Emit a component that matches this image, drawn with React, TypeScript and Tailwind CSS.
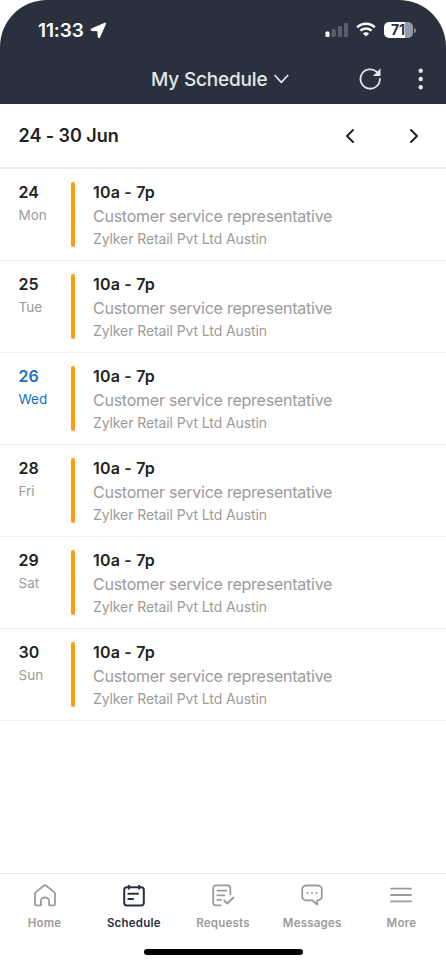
import type { ReactNode } from 'react';

type Shift = { date: string; day: string; today?: boolean };

const shifts: Shift[] = [
  { date: '24', day: 'Mon' },
  { date: '25', day: 'Tue' },
  { date: '26', day: 'Wed', today: true },
  { date: '28', day: 'Fri' },
  { date: '29', day: 'Sat' },
  { date: '30', day: 'Sun' },
];

function StatusBar() {
  return (
    <div className="flex h-[54px] items-center pt-[6px] pl-[38px] pr-[30px] text-white">
      <span className="w-[49px] pt-px text-[19px] leading-6 font-semibold tracking-[-0.1px] whitespace-nowrap">11:33</span>
      <svg className="ml-[3px]" width="17" height="17" viewBox="0 0 17 17" fill="currentColor">
        <path d="M14.700.8 1.500 6.600c-1.300.6-1.100 2.200.4 2.300l5.500.3.3 5.600c.1 1.500 1.800 1.700 2.400.4L16 2c.4-.9-.4-1.600-1.300-1.200Z" />
      </svg>
      <svg className="ml-auto" width="24" height="16" viewBox="0 0 24 16" fill="currentColor">
        <rect x="0.500" y="9.500" width="4" height="5.500" rx="1.200" />
        <g opacity="0.22">
          <rect x="6.700" y="7" width="4" height="8" rx="1.200" />
          <rect x="12.900" y="4" width="4" height="11" rx="1.200" />
          <rect x="19" y="1" width="4" height="14" rx="1.200" />
        </g>
      </svg>
      <svg className="ml-[7px]" width="20" height="16" viewBox="0 0 20 16" fill="none" stroke="currentColor" strokeWidth="2.500">
        <path d="M1.200 5.300a12.600 12.600 0 0 1 17.600 0" />
        <path d="M4.400 8.700a8 8 0 0 1 11.200 0" />
        <path d="M10 14.600 6.900 11.500a4.400 4.400 0 0 1 6.200 0Z" fill="currentColor" stroke="none" />
      </svg>
      <div className="ml-[8px] flex items-center">
        <div className="flex h-4 w-[29px] items-center justify-center rounded-[5px] bg-[linear-gradient(90deg,#fff_72.500%,#969ba3_72.500%)] pr-px text-[14px] leading-4 font-bold tracking-[-0.2px] text-[#29313f]">
          71
        </div>
        <div className="ml-px h-[5px] w-[2px] rounded-r-full bg-[#828892]" />
      </div>
    </div>
  );
}

function TitleBar() {
  return (
    <div className="flex h-[50px] items-center pl-[151px] pr-[17px] text-[#e4e6e9]">
      <h1 className="pt-[2px] text-[19px] leading-6 font-medium tracking-[-0.18px] whitespace-nowrap">My Schedule</h1>
      <svg className="ml-[7px]" width="15" height="10" viewBox="0 0 15 10" fill="none" stroke="currentColor" strokeWidth="1.700" strokeLinecap="round" strokeLinejoin="round">
        <path d="m1 1.500 6.300 6.800 6.400-6.800" />
      </svg>
      <svg className="ml-auto" width="24" height="24" viewBox="0 0 24 24" fill="none" stroke="currentColor" strokeWidth="1.800">
        <path d="M21.900 12a9.700 9.700 0 1 1-3.200-7.200L20.200 6.400" strokeLinecap="round" />
        <path d="M22.500 1.500v7.400h-7.600Z" fill="currentColor" stroke="none" />
      </svg>
      <svg className="ml-[31px]" width="16" height="24" viewBox="0 0 16 24" fill="currentColor">
        <circle cx="7.700" cy="3.700" r="2.200" />
        <circle cx="7.700" cy="12" r="2.200" />
        <circle cx="7.700" cy="20.300" r="2.200" />
      </svg>
    </div>
  );
}

function WeekBar() {
  return (
    <div className="flex h-[65px] items-center border-b-2 border-[#ececec] pl-[18.500px] pr-[27px] text-[#222]">
      <h2 className="pt-px text-[18px] leading-6 font-semibold tracking-[-0.05px]">24 - 30 Jun</h2>
      <svg className="ml-auto" width="10" height="16" viewBox="0 0 10 16" fill="none" stroke="currentColor" strokeWidth="2" strokeLinecap="round" strokeLinejoin="round">
        <path d="M8 2 2 8l6 6" />
      </svg>
      <svg className="ml-[54px]" width="10" height="16" viewBox="0 0 10 16" fill="none" stroke="currentColor" strokeWidth="2" strokeLinecap="round" strokeLinejoin="round">
        <path d="m2 2 6 6-6 6" />
      </svg>
    </div>
  );
}

function ShiftRow({ date, day, today }: Shift) {
  return (
    <li className="flex h-[92px] border-b border-[#f0f0f0] pl-[18.500px] pt-[13px]">
      <div className={`w-[52.500px] ${today ? 'text-[#1a6fc0]' : ''}`}>
        <div className={`text-[16px] leading-5 font-semibold ${today ? '' : 'text-[#222]'}`}>{date}</div>
        <div className={`mt-[4px] text-[13.500px] leading-[18px] ${today ? '' : 'text-[#9b9b9b]'}`}>{day}</div>
      </div>
      <div className="h-[65px] w-[4px] rounded-full bg-[#ff9c0b]" />
      <div className="ml-[18px] whitespace-nowrap text-[#9b9b9b]">
        <div className="text-[16px] leading-5 font-semibold tracking-[0.200px] text-[#222]">10a - 7p</div>
        <div className="mt-[3px] text-[16px] leading-[22px] tracking-[-0.240px]">Customer service representative</div>
        <div className="mt-[2px] text-[14px] leading-[20px] tracking-[-0.100px]">Zylker Retail Pvt Ltd Austin</div>
      </div>
    </li>
  );
}

function Tab({ label, active, children }: { label: string; active?: boolean; children: ReactNode }) {
  return (
    <div className={`flex flex-1 flex-col items-center pt-[10px] ${active ? 'text-[#29313f]' : 'text-[#9b9b9b]'}`}>
      <svg width="24" height="24" viewBox="0 0 24 24" fill="none" stroke="currentColor" strokeWidth={active ? 2 : 1.8} strokeLinecap="round" strokeLinejoin="round">
        {children}
      </svg>
      <span className="mt-[7px] text-[11.500px] leading-4 font-semibold tracking-[0.22px]">{label}</span>
    </div>
  );
}

function TabBar() {
  return (
    <nav className="mt-auto flex h-[91px] flex-col border-t border-[#eaeaea]">
      <div className="flex">
        <Tab label="Home">
          <path d="M2 20V9.800c0-.7.300-1.200.800-1.700l7.900-6.400a2 2 0 0 1 2.600 0l7.900 6.400c.5.500.8 1 .8 1.700V20c0 .8-.5 1.300-1.300 1.300h-4.600V17c0-2-1.900-3.500-4.100-3.500S7.900 15 7.900 17v4.300H3.300c-.8 0-1.300-.5-1.300-1.300Z" />
        </Tab>
        <Tab label="Schedule" active>
          <rect x="2.200" y="3.200" width="19.600" height="18.200" rx="2.600" />
          <path d="M6.800 1.700v3M17.200 1.700v3M6.300 9.800h9.700M6.300 15h4.800" />
        </Tab>
        <Tab label="Requests">
          <path d="M9.800 21.300H5a2.800 2.800 0 0 1-2.800-2.800V4.200A2.800 2.800 0 0 1 5 1.400h11.500a2.800 2.800 0 0 1 2.800 2.800v6.300M6.300 6.700h9M6.300 11.300h7.200M6.300 15.900h3.600" />
          <path d="m13.200 16.500 3 3 6.300-6" />
        </Tab>
        <Tab label="Messages">
          <path d="M6.200 1.500h11.600a4 4 0 0 1 4 4v6.800a4 4 0 0 1-4 4h-.6v4.200l-4.900-4.200H6.200a4 4 0 0 1-4-4V5.500a4 4 0 0 1 4-4Z" />
          <g fill="currentColor" stroke="none">
            <circle cx="7.500" cy="9" r="1" />
            <circle cx="12" cy="9" r="1" />
            <circle cx="16.500" cy="9" r="1" />
          </g>
        </Tab>
        <Tab label="More">
          <path d="M2 4.600h20M2 11h20M2 17.400h20" />
        </Tab>
      </div>
      <div className="mx-auto mt-[18px] h-[6px] w-[159px] rounded-full bg-black" />
    </nav>
  );
}

export default function App() {
  return (
    <div className="flex h-[964px] w-[446px] flex-col overflow-hidden bg-white font-['Inter','Liberation_Sans',sans-serif]">
      <header className="h-[104px] rounded-t-[47px] bg-[#29313f]">
        <StatusBar />
        <TitleBar />
      </header>
      <WeekBar />
      <ul>
        {shifts.map((shift) => (
          <ShiftRow key={shift.date} {...shift} />
        ))}
      </ul>
      <TabBar />
    </div>
  );
}
